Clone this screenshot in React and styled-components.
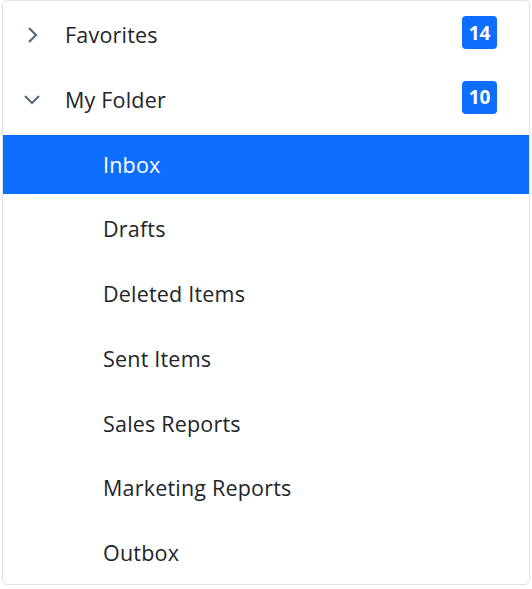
import React from 'react';
import styled, { createGlobalStyle } from 'styled-components';

const GlobalStyle = createGlobalStyle`
  html, body {
    margin: 0;
    padding: 0;
    background: #fff;
  }
`;

const Panel = styled.div`
  box-sizing: border-box;
  width: 528px;
  height: 585px;
  margin: 0 0 0 2px;
  padding: 4px 0 0;
  border: 1px solid #dee2e6;
  border-top-width: 1.5px;
  border-radius: 5px;
  display: flex;
  flex-direction: column;
  gap: 5.75px;
  font-family: "Open Sans", "Noto Sans", sans-serif;
  font-size: 21.5px;
  letter-spacing: 0.2px;
  color: #212529;
`;

const Row = styled.div`
  height: 59px;
  flex: none;
  display: flex;
  align-items: center;
  padding-left: ${p => (p.$child ? '100px' : '62px')};
  padding-right: 32px;
  position: relative;
  background: ${p => (p.$active ? '#0d6efd' : 'transparent')};
  color: ${p => (p.$active ? '#fff' : '#212529')};
`;

const Arrow = styled.svg`
  position: absolute;
  left: 17px;
  top: 50%;
  width: 24px;
  height: 24px;
  margin-top: -12px;
  fill: none;
  stroke: #5a6b7b;
  stroke-width: 2.2;
`;

const Label = styled.span`
  flex: 1;
  padding-top: 0.2px;
`;

const Badge = styled.span`
  width: 35px;
  height: 33px;
  border-radius: 4px;
  background: #0d6efd;
  color: #fff;
  font-size: 19px;
  letter-spacing: 0;
  font-weight: 700;
  display: flex;
  align-items: center;
  justify-content: center;
  margin-top: -4px;
`;

const children = ['Inbox', 'Drafts', 'Deleted Items', 'Sent Items', 'Sales Reports', 'Marketing Reports', 'Outbox'];

export default function App() {
  return (
    <>
      <GlobalStyle />
      <Panel>
        <Row>
          <Arrow viewBox="0 0 24 24"><path d="M9 5l7 7-7 7" /></Arrow>
          <Label>Favorites</Label>
          <Badge>14</Badge>
        </Row>
        <Row>
          <Arrow viewBox="0 0 24 24"><path d="M5 9l7 7 7-7" /></Arrow>
          <Label>My Folder</Label>
          <Badge>10</Badge>
        </Row>
        {children.map((name, i) => (
          <Row key={name} $child $active={i === 0}>
            <Label>{name}</Label>
          </Row>
        ))}
      </Panel>
    </>
  );
}
